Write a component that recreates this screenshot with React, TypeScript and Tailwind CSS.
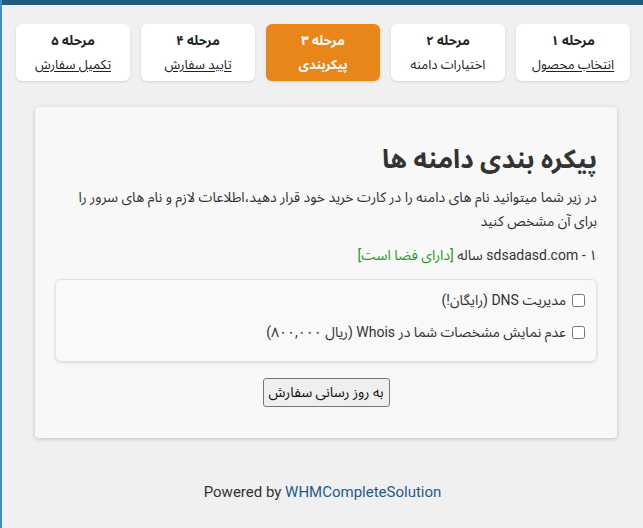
import React from "react";

const steps = [
  { num: "مرحله ۱", label: "انتخاب محصول", link: true },
  { num: "مرحله ۲", label: "اختیارات دامنه", link: false },
  { num: "مرحله ۳", label: "پیکربندی", active: true },
  { num: "مرحله ۴", label: "تایید سفارش", link: true },
  { num: "مرحله ۵", label: "تکمیل سفارش", link: true },
];

export default function App() {
  return (
    <div
      dir="rtl"
      className="min-h-screen bg-[#f0f0f0] border-l-2 border-[#3d8fc2] text-[#333] font-['Roboto','Noto_Sans_Arabic','DejaVu_Sans',sans-serif]"
    >
      {/* top strip */}
      <div className="h-[5px] bg-[#235b7e]" />

      {/* steps */}
      <div className="flex gap-[11px] pr-[13px] mt-[19px]">
        {steps.map((s) => (
          <div
            key={s.num}
            className={
              s.active
                ? "w-[114px] h-[57px] rounded-md bg-[#e8861a] text-white shadow-sm flex flex-col items-center justify-center text-[13px] leading-[24px] font-bold"
                : "w-[114px] h-[57px] rounded-md bg-white shadow-sm flex flex-col items-center justify-center text-[13px] leading-[24px] text-[#222]"
            }
          >
            <span className="font-bold">{s.num}</span>
            <span className={s.link ? "underline underline-offset-2" : ""}>{s.label}</span>
          </div>
        ))}
      </div>

      {/* main card */}
      <div className="mr-[26px] ml-[33px] mt-[26px] bg-[#f8f8f8] rounded-sm shadow-[0_1px_4px_rgba(0,0,0,0.2)] px-5 pt-[34px] pb-[31px]">
        <h1 className="text-[26px] leading-[36px] font-bold text-[#333]">
          پیکره بندی دامنه ها
        </h1>
        <p className="mt-2 text-[14px] leading-[24px]">
          در زیر شما میتوانید نام های دامنه را در کارت خرید خود قرار دهید،اطلاعات لازم و نام های سرور را برای آن مشخص کنید
        </p>
        <p className="mt-[10px] text-[14px] leading-[24px]">
          sdsadasd.com - ۱ ساله <span className="text-[#1f9a1f]">[دارای فضا است]</span>
        </p>

        <div className="mt-3 bg-[#f9f9f9] border border-[#e2e2e2] rounded-md shadow-[0_1px_3px_rgba(0,0,0,0.12)] pr-[8px] pt-2 pb-[17px] flex flex-col gap-2 text-[14px] leading-[24px]">
          <label className="flex items-center gap-[3px]">
            <input type="checkbox" className="w-[13px] h-[13px] m-[3px]" />
            <span>مدیریت DNS (رایگان!)</span>
          </label>
          <label className="flex items-center gap-[3px]">
            <input type="checkbox" className="w-[13px] h-[13px] m-[3px]" />
            <span>عدم نمایش مشخصات شما در Whois (ریال ۸۰۰,۰۰۰)</span>
          </label>
        </div>

        <div className="mt-4 flex justify-center">
          <button className="h-[29px] px-[5px] text-[14px] bg-[#efefef] border border-[#767676] rounded-[3px] text-[#111]">
            به روز رسانی سفارش
          </button>
        </div>
      </div>

      {/* footer */}
      <div dir="ltr" className="mt-[44px] text-center text-[15px] leading-[20px] text-[#333]">
        Powered by <a className="text-[#1b5c8c]">WHMCompleteSolution</a>
      </div>
    </div>
  );
}
